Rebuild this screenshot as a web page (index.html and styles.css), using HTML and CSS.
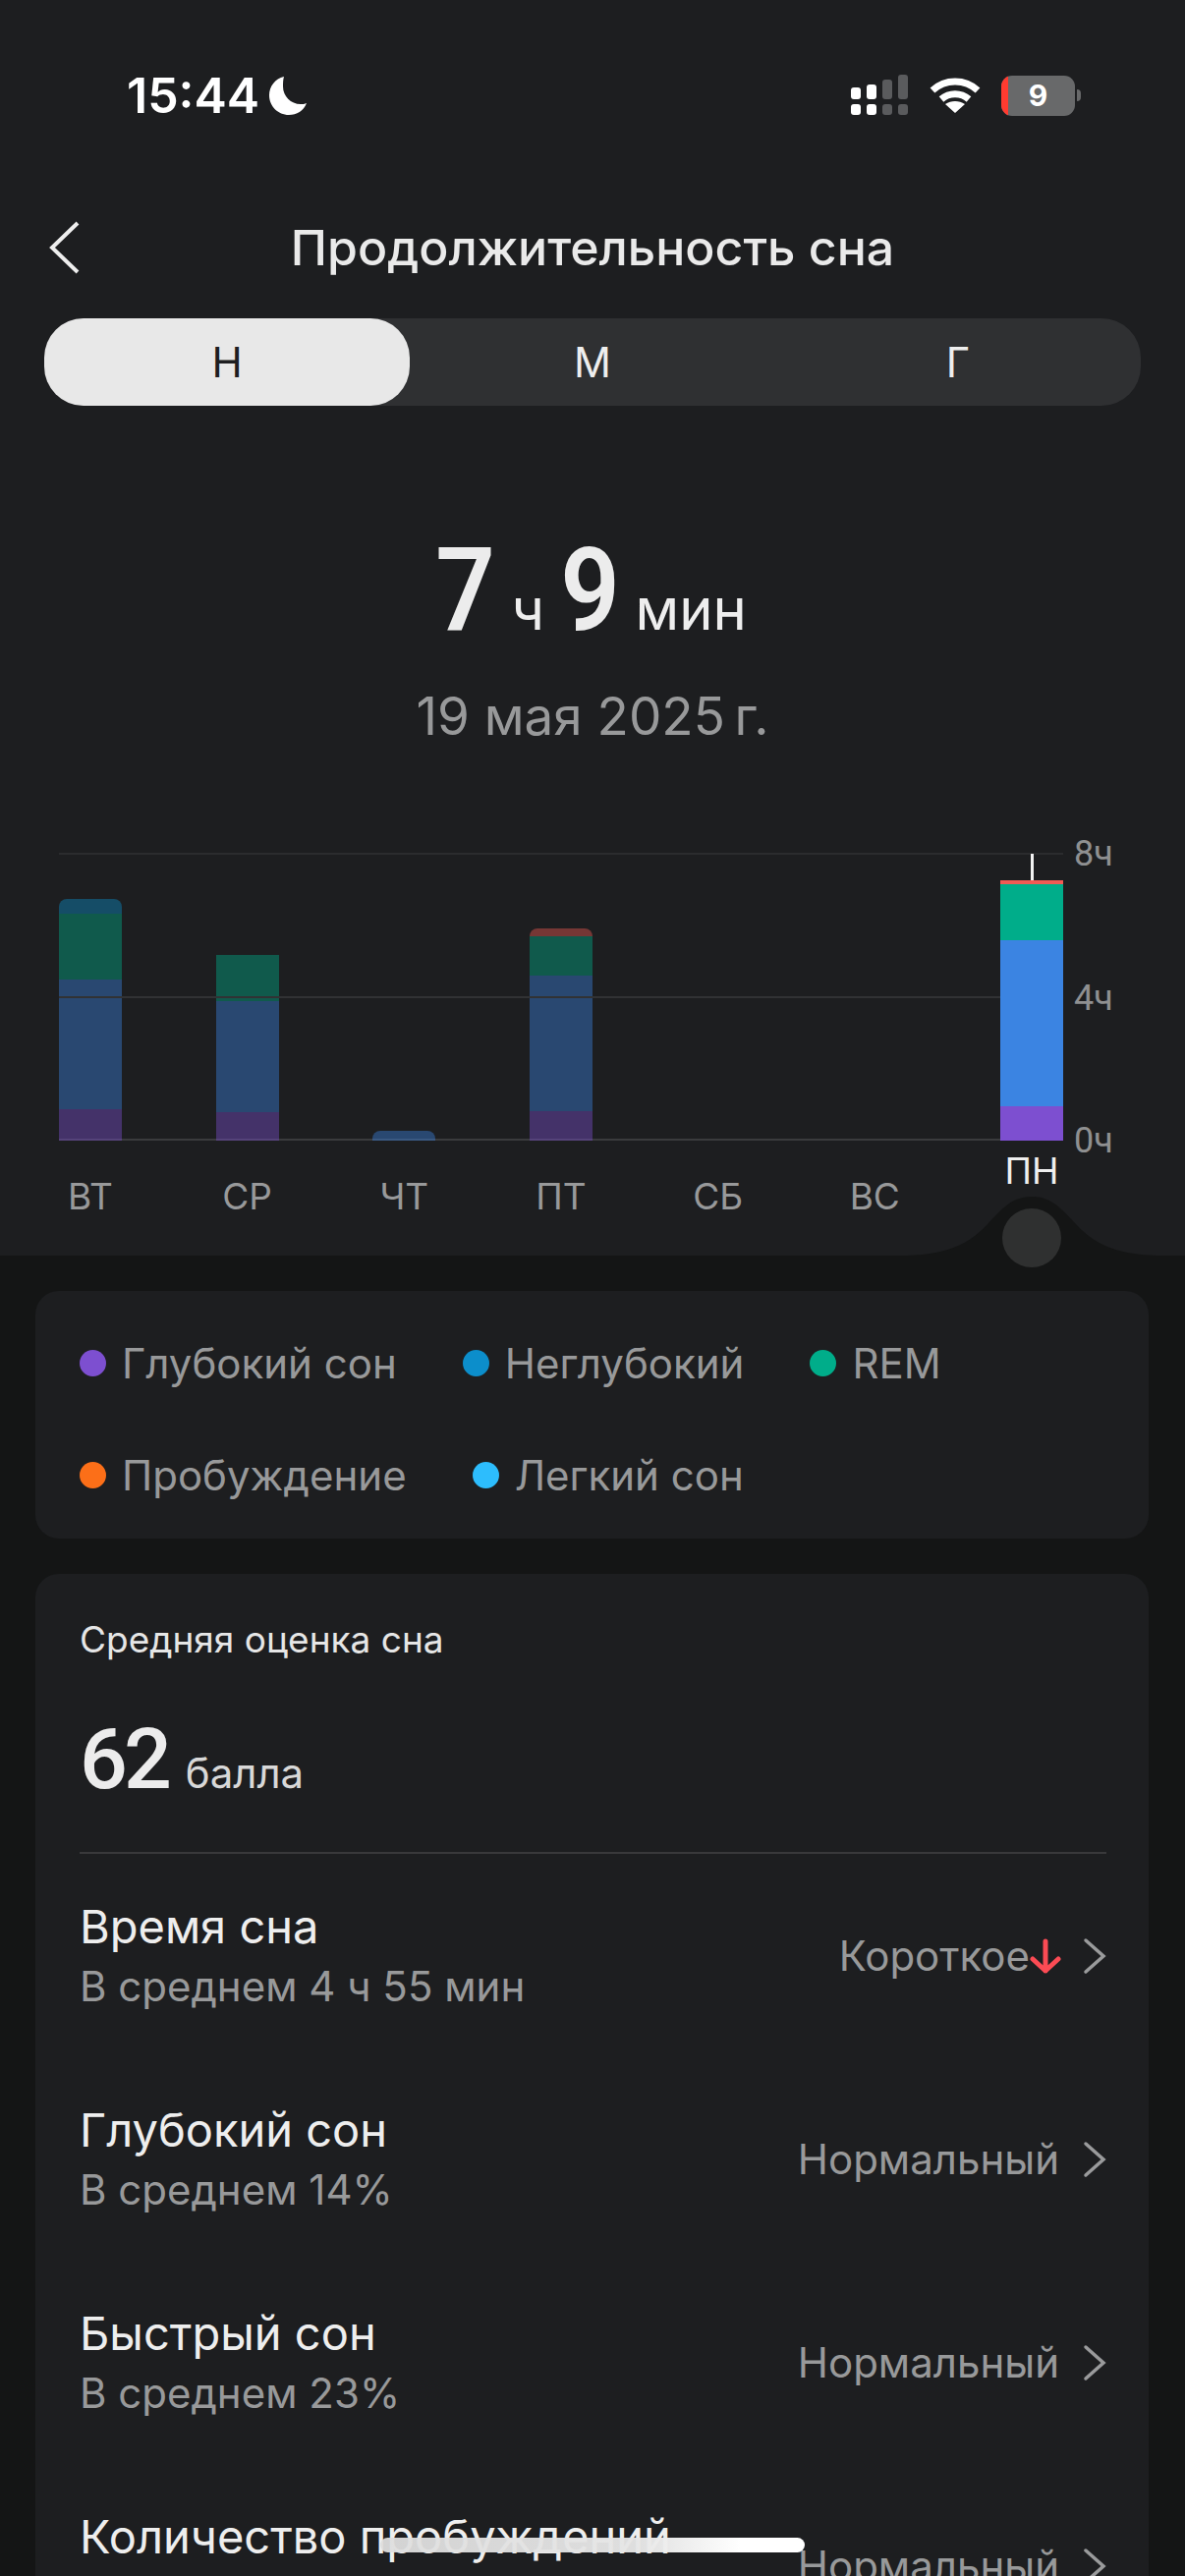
FILE: index.html
```html
<!DOCTYPE html>
<html lang="ru">
<head>
  <meta charset="UTF-8">
  <title>Продолжительность сна</title>
  <link rel="stylesheet" href="styles.css">
</head>
<body>
<div id="app">
  <div class="panel">
    <div class="status">
      <div class="status-left">
        <span class="time">15:44</span>
        <svg class="moon" width="42" height="42" viewBox="0 0 42 42"><path d="M17 2C8 4 2 12 2 21c0 11 9 20 20 20 8 0 15-4 18-12-2 1-4 1-6 1-10 0-18-8-18-18 0-3 0-7 1-10z" fill="#fff"/></svg>
      </div>
      <div class="status-right">
        <svg width="60" height="42" viewBox="0 0 60 42" fill="#fff">
          <rect x="0" y="13" width="10" height="12" rx="3"/>
          <rect x="16" y="10" width="10" height="15" rx="3"/>
          <rect x="32" y="5" width="10" height="20" rx="3" fill="#5a5b5d"/>
          <rect x="48" y="0" width="10" height="25" rx="3" fill="#5a5b5d"/>
          <rect x="0" y="30" width="10" height="11" rx="3"/>
          <rect x="16" y="30" width="10" height="11" rx="3"/>
          <rect x="32" y="30" width="10" height="11" rx="3" fill="#5a5b5d"/>
          <rect x="48" y="30" width="10" height="11" rx="3" fill="#5a5b5d"/>
        </svg>
        <svg class="wifi" width="52" height="38" viewBox="0 0 52 38" fill="none" stroke="#fff" stroke-width="7">
          <path d="M3 14C16 2 36 2 49 14"/>
          <path d="M12 23c8-7 20-7 28 0"/>
          <path d="M26 37l-10-9c6-4 14-4 20 0z" fill="#fff" stroke="none"/>
        </svg>
        <div class="battery">
          <div class="battery-body"><span class="battery-low"></span><span class="battery-num">9</span></div>
          <span class="battery-tip"></span>
        </div>
      </div>
    </div>

    <div class="nav">
      <svg class="back" width="34" height="54" viewBox="0 0 34 54" fill="none" stroke="#eee" stroke-width="4"><path d="M30 2L4 27l26 25"/></svg>
      <div class="title">Продолжительность сна</div>
    </div>

    <div class="tabs">
      <div class="tab active">Н</div>
      <div class="tab">М</div>
      <div class="tab">Г</div>
    </div>

    <div class="total"><b>7</b><span>ч</span><b>9</b><span>мин</span></div>
    <div class="date">19 мая 2025&#8201;г.</div>

    <div class="chart">
      <div class="plot">
        <span class="gridline g8"></span>
        <span class="gridline g4"></span>
        <span class="gridline g0"></span>
        <span class="axis a8">8ч</span>
        <span class="axis a4">4ч</span>
        <span class="axis a0">0ч</span>
        <div class="bars">
          <div class="bar dim round">
            <i class="cyan" style="height:15px"></i><i class="green" style="height:67px"></i><i class="blue" style="height:132px"></i><i class="purple" style="height:32px"></i>
          </div>
          <div class="bar dim">
            <i class="green" style="height:47px"></i><i class="blue" style="height:113px"></i><i class="purple" style="height:29px"></i>
          </div>
          <div class="bar dim round">
            <i class="blue" style="height:10px"></i>
          </div>
          <div class="bar dim round">
            <i class="red" style="height:8px"></i><i class="green" style="height:40px"></i><i class="blue" style="height:138px"></i><i class="purple" style="height:30px"></i>
          </div>
          <div class="bar dim"></div>
          <div class="bar dim"></div>
          <div class="bar current">
            <span class="tick"></span>
            <i class="red" style="height:4px"></i><i class="green" style="height:57px"></i><i class="blue" style="height:169px"></i><i class="purple" style="height:35px"></i>
          </div>
        </div>
      </div>
      <div class="days">
        <span>ВТ</span><span>СР</span><span>ЧТ</span><span>ПТ</span><span>СБ</span><span>ВС</span><span class="today">ПН</span>
      </div>
    </div>

    <svg class="bump" width="270" height="60" viewBox="0 0 270 60"><path d="M0 60C45 60 70 50 90 28 108 8 118 0 135 0s27 8 45 28c20 22 45 32 90 32z" fill="#141515"/></svg>
    <span class="knob"></span>
  </div>

  <div class="content">
    <div class="card legend">
      <div class="legend-row">
        <span class="item"><i class="dot" style="background:#7d4fd0"></i>Глубокий сон</span>
        <span class="item"><i class="dot" style="background:#0c8ecb"></i>Неглубокий</span>
        <span class="item"><i class="dot" style="background:#00ad8a"></i>REM</span>
      </div>
      <div class="legend-row">
        <span class="item"><i class="dot" style="background:#fc6f18"></i>Пробуждение</span>
        <span class="item"><i class="dot" style="background:#2dbdfd"></i>Легкий сон</span>
      </div>
    </div>

    <div class="card stats">
      <div class="stats-label">Средняя оценка сна</div>
      <div class="score"><b>62</b><span>балла</span></div>
      <div class="divider"></div>

      <div class="row">
        <div class="row-text"><div class="row-name">Время сна</div><div class="row-sub">В среднем 4 ч 55 мин</div></div>
        <div class="row-val">Короткое<svg class="arrow" width="32" height="36" viewBox="0 0 32 36" fill="none" stroke="#fb4b54" stroke-width="5" stroke-linecap="round" stroke-linejoin="round"><path d="M16 3v30M3 21l13 12 13-12"/></svg><svg class="chev" width="24" height="38" viewBox="0 0 24 38" fill="none" stroke="#9a9b9c" stroke-width="3.5" stroke-linecap="round"><path d="M3 3l18 16L3 35"/></svg></div>
      </div>
      <div class="row">
        <div class="row-text"><div class="row-name">Глубокий сон</div><div class="row-sub">В среднем 14%</div></div>
        <div class="row-val">Нормальный<svg class="chev" width="24" height="38" viewBox="0 0 24 38" fill="none" stroke="#9a9b9c" stroke-width="3.5" stroke-linecap="round"><path d="M3 3l18 16L3 35"/></svg></div>
      </div>
      <div class="row">
        <div class="row-text"><div class="row-name">Быстрый сон</div><div class="row-sub">В среднем 23%</div></div>
        <div class="row-val">Нормальный<svg class="chev" width="24" height="38" viewBox="0 0 24 38" fill="none" stroke="#9a9b9c" stroke-width="3.5" stroke-linecap="round"><path d="M3 3l18 16L3 35"/></svg></div>
      </div>
      <div class="row">
        <div class="row-text"><div class="row-name">Количество пробуждений</div></div>
        <div class="row-val">Нормальный<svg class="chev" width="24" height="38" viewBox="0 0 24 38" fill="none" stroke="#9a9b9c" stroke-width="3.5" stroke-linecap="round"><path d="M3 3l18 16L3 35"/></svg></div>
      </div>
    </div>
  </div>

  <div class="home"></div>
</div>
</body>
</html>
```

FILE: styles.css
```css
html, body {
  margin: 0;
  padding: 0;
  background: #141515;
}

#app {
  position: relative;
  width: 1206px;
  height: 2622px;
  overflow: hidden;
  font-family: Inter, "Liberation Sans", sans-serif;
  color: #eeeeee;
}

.panel {
  position: relative;
  height: 1278px;
  background: #1d1e20;
}

/* status bar */
.status {
  display: flex;
  justify-content: space-between;
  align-items: center;
  height: 42px;
  padding: 76px 106px 0 129px;
}

.status-left, .status-right {
  display: flex;
  align-items: center;
}

.time {
  font-size: 50px;
  font-weight: 600;
  color: #fff;
}

.moon {
  margin-left: 8px;
}

.wifi {
  margin-left: 20px;
}

.battery {
  display: flex;
  align-items: center;
  margin-left: 21px;
}

.battery-body {
  position: relative;
  width: 75px;
  height: 41px;
  border-radius: 11px;
  background: #68696a;
  overflow: hidden;
  text-align: center;
}

.battery-low {
  position: absolute;
  left: 0;
  top: 0;
  bottom: 0;
  width: 7px;
  background: #ff3b30;
}

.battery-num {
  font-size: 30px;
  font-weight: 700;
  line-height: 41px;
  color: #fff;
}

.battery-tip {
  width: 4px;
  height: 12px;
  margin-left: 2px;
  border-radius: 0 6px 6px 0;
  background: #68696a;
}

/* header */
.nav {
  position: relative;
  margin-top: 92px;
  height: 84px;
  display: flex;
  align-items: center;
  justify-content: center;
}

.back {
  position: absolute;
  left: 49px;
  top: 15px;
}

.title {
  font-size: 50px;
  font-weight: 500;
  color: #eaeaea;
}

.tabs {
  display: flex;
  height: 89px;
  margin: 30px 45px 0;
  border-radius: 40px;
  background: #2f3032;
}

.tab {
  flex: 1;
  display: flex;
  align-items: center;
  justify-content: center;
  font-size: 42px;
  color: #eeeeee;
}

.tab.active {
  background: #e8e8e8;
  color: #1d1e20;
  border-radius: 40px;
}

/* total */
.total {
  display: flex;
  justify-content: center;
  align-items: baseline;
  margin-top: 138px;
  padding-right: 6px;
  height: 100px;
  line-height: 100px;
}

.total b {
  display: inline-block;
  font-family: Roboto, sans-serif;
  font-size: 118px;
  font-weight: 600;
  color: #ececec;
  transform: scaleX(0.9);
}

.total span {
  font-size: 58px;
  margin: 0 13px;
  color: #eeeeee;
}

.total span:last-child {
  margin: 0 0 0 12px;
}

.date {
  margin-top: 48px;
  text-align: center;
  font-size: 53px;
  line-height: 60px;
  color: #98999a;
}

/* chart */
.chart {
  margin-top: 109px;
}

.plot {
  position: relative;
  height: 293px;
  margin-left: 60px;
  width: 1022px;
}

.gridline {
  position: absolute;
  left: 0;
  right: 0;
  height: 2px;
}

.g8 { top: 0; background: #2b2c2e; }
.g4 { top: 146px; background: #313234; z-index: 2; }
.g0 { top: 291px; background: #3a3b3d; }

.axis {
  position: absolute;
  left: 1033px;
  font-family: Roboto, sans-serif;
  font-size: 36px;
  line-height: 36px;
  color: #8f9091;
}

.a8 { top: -17px; }
.a4 { top: 130px; }
.a0 { top: 275px; }

.bars {
  position: relative;
  display: flex;
  justify-content: space-between;
  align-items: flex-end;
  height: 293px;
}

.bar {
  position: relative;
  display: flex;
  flex-direction: column;
  width: 64px;
  z-index: 3;
}

.bar i {
  display: block;
}

.bar.round i:first-child {
  border-radius: 8px 8px 0 0;
}

.bar.dim {
  z-index: 1;
}

.bar.dim i {
  opacity: 0.42;
}

.tick {
  position: absolute;
  left: 31px;
  top: -27px;
  width: 3px;
  height: 27px;
  background: #f2f2f2;
}

.cyan { background: #0c8ecb; }
.green { background: #00ad8a; }
.blue { background: #3b84e2; }
.purple { background: #7d4fd0; }
.red { background: #f25a54; }

.days {
  display: flex;
  justify-content: space-between;
  margin: 35px 0 0 60px;
  width: 1022px;
  font-size: 37px;
  line-height: 44px;
  color: #98999a;
}

.days span {
  display: flex;
  justify-content: center;
  width: 64px;
}

.days .today {
  position: relative;
  top: -26px;
  color: #efefef;
}

.bump {
  position: absolute;
  left: 915px;
  bottom: 0;
}

.knob {
  position: absolute;
  left: 1020px;
  top: 1230px;
  width: 60px;
  height: 60px;
  border-radius: 50%;
  background: #2f3030;
}

/* cards */
.content {
  padding: 36px 37px 0 36px;
}

.card {
  background: #1d1e20;
  border-radius: 24px;
}

.legend {
  height: 252px;
  padding: 16px 45px 0;
  box-sizing: border-box;
}

.legend-row {
  display: flex;
  align-items: center;
  gap: 67px;
  height: 114px;
}

.item {
  display: flex;
  align-items: center;
  font-size: 42px;
  color: #98999a;
}

.dot {
  width: 27px;
  height: 27px;
  margin-right: 16px;
  border-radius: 50%;
}

.stats {
  margin-top: 36px;
  height: 1100px;
  padding: 0 43px 0 45px;
}

.stats-label {
  padding-top: 47px;
  font-size: 37px;
  line-height: 40px;
  color: #e6e6e6;
}

.score {
  display: flex;
  align-items: baseline;
  margin-top: 57px;
  height: 90px;
  line-height: 90px;
}

.score b {
  font-family: Roboto, sans-serif;
  font-size: 86px;
  font-weight: 500;
  letter-spacing: -4px;
  color: #ececec;
}

.score span {
  margin-left: 18px;
  font-size: 42px;
  color: #d8d8d8;
}

.divider {
  height: 2px;
  margin-top: 49px;
  background: #39393b;
}

.row {
  display: flex;
  justify-content: space-between;
  height: 207px;
}

.row-text {
  padding-top: 49px;
}

.row-name {
  font-size: 47px;
  line-height: 50px;
  color: #eeeeee;
}

.row-sub {
  margin-top: 7px;
  font-size: 42px;
  line-height: 58px;
  color: #98999a;
}

.row-val {
  display: flex;
  align-items: center;
  align-self: center;
  font-size: 42px;
  color: #98999a;
}

.chev {
  margin-left: 24px;
}

.arrow + .chev {
  margin-left: 22px;
}

.home {
  position: absolute;
  left: 387px;
  top: 2583px;
  width: 432px;
  height: 15px;
  border-radius: 8px;
  background: linear-gradient(90deg, rgba(222,222,222,.94), rgba(230,230,230,.96) 60%, #ffffff 85%);
}
```
